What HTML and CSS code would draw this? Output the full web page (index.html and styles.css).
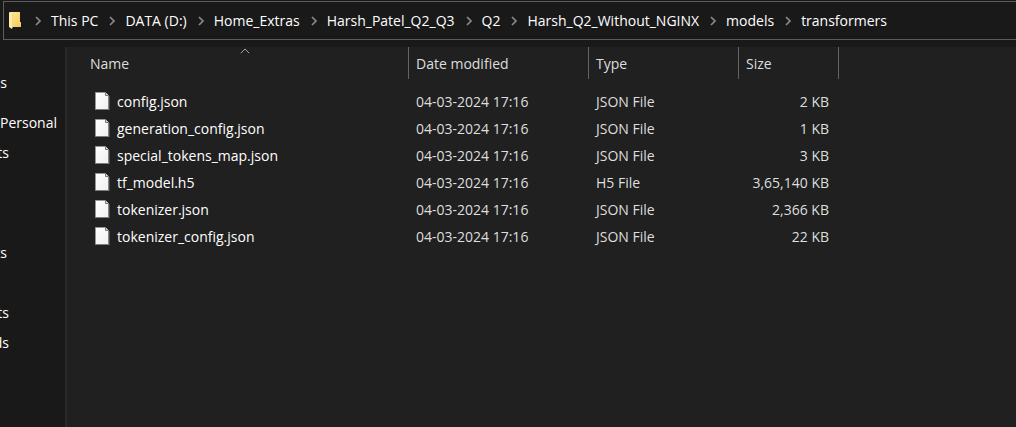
FILE: index.html
```html
<!DOCTYPE html>
<html lang="en">
<head>
<meta charset="utf-8">
<title>transformers</title>
<link rel="stylesheet" href="styles.css">
</head>
<body>
<svg class="defs" aria-hidden="true">
  <linearGradient id="paper" x1="0" y1="0" x2="1" y2="1"><stop offset="0" stop-color="#fff"/><stop offset="1" stop-color="#efeff0"/></linearGradient>
  <linearGradient id="gold" x1="0" y1="0" x2="1" y2="1"><stop offset="0" stop-color="#ffe698"/><stop offset="1" stop-color="#f3ca58"/></linearGradient>
  <symbol id="file" viewBox="0 0 15 18">
    <path d="M.5 .5H10.5L14 4V17.500H.5Z" fill="url(#paper)"/>
    <path d="M.5 17.500V.5H10.500L14 4" fill="none" stroke="#969696"/>
    <path d="M0 17.500H14.500" stroke="#7b7b7b"/>
    <path d="M13.500 4V18" stroke="#858585"/>
    <path d="M10.500 .5V3.500H13.500" fill="#ddd" stroke="#777"/>
    <path d="M14.500 4V18" stroke="#444"/>
  </symbol>
  <symbol id="chev" viewBox="0 0 7 10"><path d="M1 1L5 5L1 9" fill="none" stroke="#8a8a8a" stroke-width="1.700"/></symbol>
</svg>
<nav class="address" aria-label="Address">
  <svg class="folder" viewBox="0 0 12 17"><path d="M1 0H11V10H12V15H2Z" fill="url(#gold)"/><path d="M0 0L4 2V14L3 17L0 15Z" fill="#ffe9a7"/><path d="M3.500 2V15" stroke="#e9c76a" stroke-width=".6"/></svg>
  <ol class="crumbs">
    <li><svg class="chev"><use href="#chev"/></svg><a href="#">This PC</a></li>
    <li><svg class="chev"><use href="#chev"/></svg><a href="#">DATA (D:)</a></li>
    <li><svg class="chev"><use href="#chev"/></svg><a href="#">Home_Extras</a></li>
    <li><svg class="chev"><use href="#chev"/></svg><a href="#">Harsh_Patel_Q2_Q3</a></li>
    <li><svg class="chev"><use href="#chev"/></svg><a href="#">Q2</a></li>
    <li><svg class="chev"><use href="#chev"/></svg><a href="#">Harsh_Q2_Without_NGINX</a></li>
    <li><svg class="chev"><use href="#chev"/></svg><a href="#">models</a></li>
    <li><svg class="chev"><use href="#chev"/></svg><a href="#">transformers</a></li>
  </ol>
</nav>
<div class="panes">
  <ul class="sidebar">
    <li><a class="short" href="#">ss</a></li>
    <li class="group-s"><a class="wide" href="#">Personal</a></li>
    <li><a href="#">ts</a></li>
    <li class="group-l"><a class="short" href="#">ts</a></li>
    <li class="group-m"><a href="#">ts</a></li>
    <li><a href="#">ds</a></li>
  </ul>
  <main class="files">
    <table>
      <colgroup><col class="c-name"><col class="c-date"><col class="c-type"><col class="c-size"><col></colgroup>
      <thead>
        <tr><th class="name" scope="col" aria-sort="ascending">Name<svg class="sort" viewBox="0 0 10 6"><path d="M.8 5.200L5 1L9.200 5.200" fill="none" stroke="#a5a5a5"/></svg></th><th scope="col">Date modified</th><th scope="col">Type</th><th scope="col">Size</th><td></td></tr>
      </thead>
      <tbody>
        <tr><td class="name"><a href="#"><svg class="file"><use href="#file"/></svg>config.json</a></td><td>04-03-2024 17:16</td><td>JSON File</td><td class="size">2 KB</td></tr>
        <tr><td class="name"><a href="#"><svg class="file"><use href="#file"/></svg>generation_config.json</a></td><td>04-03-2024 17:16</td><td>JSON File</td><td class="size">1 KB</td></tr>
        <tr><td class="name"><a href="#"><svg class="file"><use href="#file"/></svg>special_tokens_map.json</a></td><td>04-03-2024 17:16</td><td>JSON File</td><td class="size">3 KB</td></tr>
        <tr><td class="name"><a href="#"><svg class="file"><use href="#file"/></svg>tf_model.h5</a></td><td>04-03-2024 17:16</td><td>H5 File</td><td class="size">3,65,140 KB</td></tr>
        <tr><td class="name"><a href="#"><svg class="file"><use href="#file"/></svg>tokenizer.json</a></td><td>04-03-2024 17:16</td><td>JSON File</td><td class="size">2,366 KB</td></tr>
        <tr><td class="name"><a href="#"><svg class="file"><use href="#file"/></svg>tokenizer_config.json</a></td><td>04-03-2024 17:16</td><td>JSON File</td><td class="size">22 KB</td></tr>
      </tbody>
    </table>
  </main>
</div>
</body>
</html>
```
FILE: styles.css
```css
* { box-sizing: border-box; }
body {
  margin: 0;
  min-height: 100vh;
  display: flex;
  flex-direction: column;
  background: #191919;
  color: #fff;
  font: 14px/20px "Open Sans", "Noto Sans", sans-serif;
}
a { color: inherit; text-decoration: none; }
ul, ol { list-style: none; margin: 0; padding: 0; }
.defs { position: absolute; width: 0; height: 0; }

.address {
  display: flex;
  align-items: center;
  height: 39px;
  margin: 1px 0 7px 3px;
  padding-left: 5px;
  border: 1px solid #5c5c5c;
  border-right: 0;
}
.folder { width: 12px; height: 17px; }
.crumbs { display: flex; white-space: nowrap; padding-left: 14px; }
.crumbs li { display: flex; align-items: center; padding-right: 11px; }
.chev { width: 7px; height: 10px; margin-right: 9px; }

.panes { flex: 1; display: flex; }
.sidebar { width: 67px; padding-top: 21px; border-right: 2px solid #292929; }
.sidebar li { height: 30px; display: flex; align-items: center; }
.sidebar a { display: flex; justify-content: flex-end; width: 9px; overflow: hidden; }
.sidebar .short { width: 7px; }
.sidebar .wide { width: auto; }
.sidebar .group-s { margin-top: 10px; }
.sidebar .group-m { margin-top: 30px; }
.sidebar .group-l { margin-top: 70px; }

.files { flex: 1; background: #202020; }
table { width: 100%; table-layout: fixed; border-collapse: separate; border-spacing: 0; color: #dedede; }
.c-name { width: 342px; }
.c-date { width: 180px; }
.c-type { width: 150px; }
.c-size { width: 100px; }
th, td { padding: 0 0 0 7px; text-align: left; font-weight: 400; white-space: nowrap; }
th { position: relative; height: 32px; border-right: 1px solid #636363; }
thead th { padding-top: 2px; }
tbody td { height: 27px; }
tbody::before { content: ""; display: block; height: 9px; }
.name { padding-left: 23px; }
.sort { position: absolute; top: 1px; left: calc(50% + 2px); width: 10px; height: 6px; }
td.name { color: #fff; padding-left: 28px; }
.name a { display: flex; align-items: center; }
.file { width: 15px; height: 18px; margin: 0 7px 2px 0; }
tbody .size { text-align: right; padding-right: 10px; }
```
